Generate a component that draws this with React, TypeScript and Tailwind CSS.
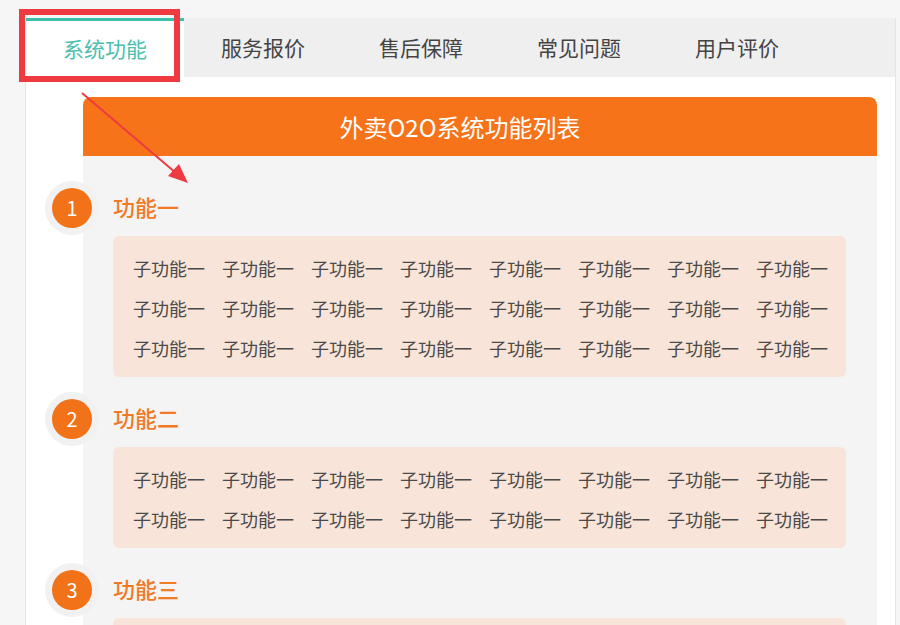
// Tabbed "系统功能" panel with orange list header and numbered feature groups
const tabs = ['系统功能', '服务报价', '售后保障', '常见问题', '用户评价']

const groups = [
    { no: 1, title: '功能一', count: 24 },
    { no: 2, title: '功能二', count: 16 },
    { no: 3, title: '功能三', count: 0 },
]

function Group({ no, title, count }: { no: number; title: string; count: number }) {
    return (
        <div className="relative">
            {/* Number badge with halo */}
            <div className="absolute left-[-38px] top-px w-[54px] h-[54px] rounded-full bg-[#f1f1f1] flex items-center justify-center">
                <div className="w-10 h-10 rounded-full bg-[#f27219] text-white text-[20px] flex items-center justify-center leading-none">
                    {no}
                </div>
            </div>
            <div className="h-[56px] flex items-center pl-[30px] pb-[3px] text-[22px] font-medium text-[#f07a26]">{title}</div>
            <div className="ml-[30px] mr-[31px] min-h-[40px] rounded-md bg-[#f8e4d8] pl-5 pt-3 pb-[9px] grid grid-cols-[repeat(8,89px)]">
                {Array.from({ length: count }).map((_, i) => (
                    <div key={i} className="h-10 leading-10 text-[18px] text-[#4a4a4a] whitespace-nowrap">
                        子功能一
                    </div>
                ))}
            </div>
        </div>
    )
}

export default function App() {
    return (
        <div
            className="relative w-[900px] h-[625px] overflow-hidden bg-[#f6f6f6]"
            style={{ fontFamily: '"Noto Sans CJK SC", "Noto Sans", sans-serif' }}
        >
            <div className="ml-[25px] mt-[18px] w-[871px] h-[607px] bg-white border-x border-[#e4e4e4]">
                {/* Tabs */}
                <div className="flex h-[59px] bg-[#efefef]">
                    {tabs.map((t, i) => (
                        <div
                            key={t}
                            className={
                                i === 0
                                    ? 'w-[158px] flex items-center justify-center text-[21px] bg-white border-t-[3px] border-[#3dbfae] text-[#4cbfaf]'
                                    : 'w-[158px] flex items-center justify-center text-[21px] text-[#444]'
                            }
                        >
                            {t}
                        </div>
                    ))}
                </div>

                {/* Content */}
                <div className="pt-5 pl-[57px]">
                    <div className="w-[794px]">
                        <div className="h-[59px] rounded-t-lg bg-[#f6731a] text-white text-[24px] pr-10 flex items-center justify-center">
                            外卖O2O系统功能列表
                        </div>
                        <div className="bg-[#f4f4f4] pt-6 flex flex-col gap-[14px] h-[480px]">
                            {groups.map((g) => (
                                <Group key={g.no} {...g} />
                            ))}
                        </div>
                    </div>
                </div>
            </div>

            {/* Red annotation overlay */}
            <svg className="absolute left-0 top-0 pointer-events-none" width="900" height="625">
                <rect x="22" y="12" width="155" height="67" fill="none" stroke="#ee3a40" strokeWidth="6" />
                <line x1="82" y1="93" x2="176" y2="173" stroke="#ee3a40" strokeWidth="2" />
                <polygon points="188,183 168,176 179,164" fill="#ee3a40" />
            </svg>
        </div>
    )
}
